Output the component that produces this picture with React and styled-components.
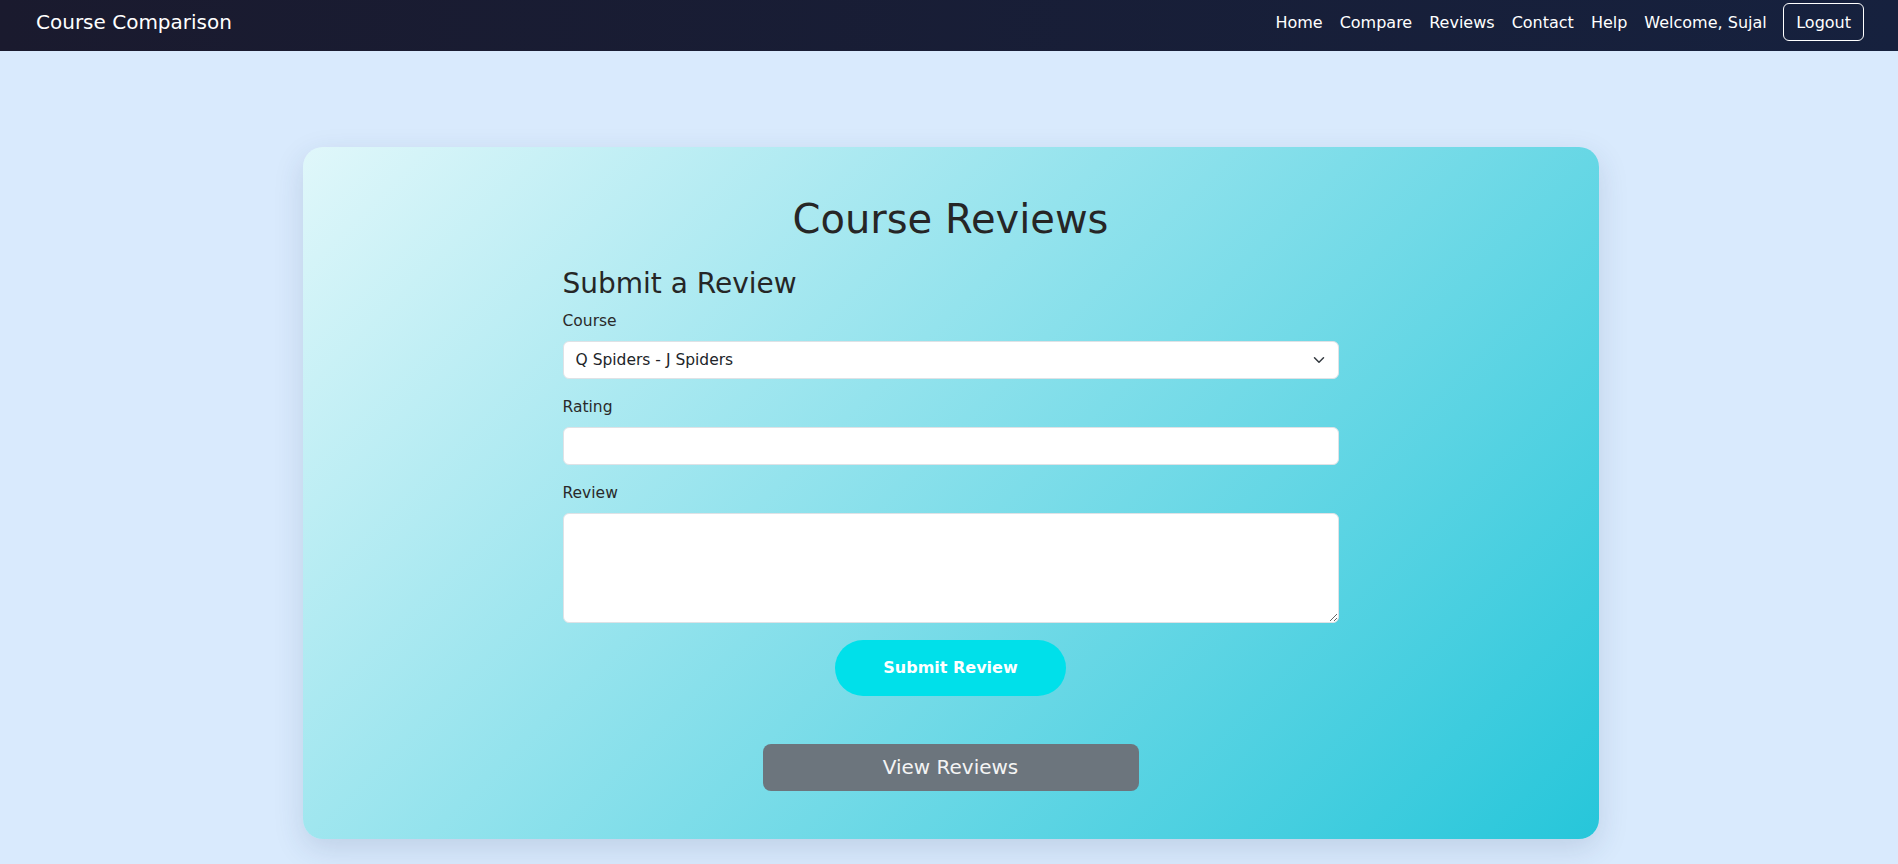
import styled, { createGlobalStyle } from "styled-components";
import { useState } from "react";

const GlobalStyle = createGlobalStyle`
    * { box-sizing: border-box; }
    body {
        margin: 0;
        background: #d9eafd;
        font-family: "DejaVu Sans", "Noto Sans", sans-serif;
        color: #212529;
    }
`

function App() {
    const [course, setCourse] = useState("qj");
    const [rating, setRating] = useState("");
    const [review, setReview] = useState("");

    return (
        <>
            <GlobalStyle />
            <Navbar>
                <Brand href="#">Course Comparison</Brand>
                <NavLinks>
                    <NavLink href="#">Home</NavLink>
                    <NavLink href="#">Compare</NavLink>
                    <NavLink href="#">Reviews</NavLink>
                    <NavLink href="#">Contact</NavLink>
                    <NavLink href="#">Help</NavLink>
                    <Welcome>Welcome, Sujal</Welcome>
                    <LogoutButton>Logout</LogoutButton>
                </NavLinks>
            </Navbar>

            <Page>
                <Card>
                    <Title>Course Reviews</Title>
                    <Form onSubmit={e => e.preventDefault()}>
                        <Heading>Submit a Review</Heading>
                        <Field>
                            <Label htmlFor="course">Course</Label>
                            <SelectWrap>
                                <Select id="course" value={course} onChange={e => setCourse(e.target.value)}>
                                    <option value="qj">Q Spiders - J Spiders</option>
                                </Select>
                                <Chevron viewBox="0 0 16 16">
                                    <path d="M2 5l6 6 6-6" fill="none" stroke="#343a40" strokeWidth="2" strokeLinecap="round" strokeLinejoin="round" />
                                </Chevron>
                            </SelectWrap>
                        </Field>
                        <Field>
                            <Label htmlFor="rating">Rating</Label>
                            <Input id="rating" type="number" value={rating} onChange={e => setRating(e.target.value)} />
                        </Field>
                        <Field>
                            <Label htmlFor="review">Review</Label>
                            <TextArea id="review" rows={4} value={review} onChange={e => setReview(e.target.value)} />
                        </Field>
                        <SubmitButton type="submit">Submit Review</SubmitButton>
                    </Form>
                    <ViewButton>View Reviews</ViewButton>
                </Card>
            </Page>
        </>
    );
}

const Navbar = styled.nav`
    height: 51px;
    padding: 3px 34px 10px 36px;
    display: flex;
    align-items: center;
    justify-content: space-between;
    background: linear-gradient(90deg, #1a1a2e, #16213e);
`

const Brand = styled.a`
    color: #fff;
    font-size: 20px;
    text-decoration: none;
`

const NavLinks = styled.div`
    display: flex;
    align-items: center;
`

const NavLink = styled.a`
    color: #fff;
    font-size: 16px;
    padding: 0 8.5px;
    text-decoration: none;
`

const Welcome = styled.span`
    color: #fff;
    font-size: 16px;
    padding: 0 8.5px;
    margin-right: 8px;
`

const LogoutButton = styled.button`
    font-family: inherit;
    font-size: 16px;
    color: #fff;
    background: transparent;
    border: 1px solid #fff;
    border-radius: 6px;
    height: 38px;
    padding: 0 12px;
`

const Page = styled.main`
    padding: 96px 0 40px 3px;
    display: flex;
    justify-content: center;
`

const Card = styled.section`
    width: 1296px;
    padding: 48px;
    border-radius: 20px;
    background: linear-gradient(135deg, #e0f7fa, #26c6da);
    box-shadow: 0 10px 30px rgba(40, 60, 100, 0.15);
    display: flex;
    flex-direction: column;
    align-items: center;
`

const Title = styled.h1`
    margin: 0 0 24px;
    font-size: 40px;
    font-weight: 400;
    line-height: 1.2;
    color: #262626;
`

const Form = styled.form`
    width: 776px;
    display: flex;
    flex-direction: column;
`

const Heading = styled.h3`
    margin: 0 0 8px;
    font-size: 28px;
    font-weight: 400;
    line-height: 1.2;
    color: #262626;
`

const Field = styled.div`
    display: flex;
    flex-direction: column;
    margin-bottom: 16px;
`

const Label = styled.label`
    font-size: 15.5px;
    line-height: 24px;
    margin-bottom: 8px;
    color: #2a2a2a;
`

const controlStyles = `
    width: 100%;
    font-family: inherit;
    font-size: 15.5px;
    line-height: 24px;
    color: #212529;
    background: #fff;
    border: 1px solid #dee2e6;
    border-radius: 6px;
    padding: 6px 12px;
    outline: none;
`

const SelectWrap = styled.div`
    position: relative;
`

const Select = styled.select`
    ${controlStyles}
    height: 38px;
    appearance: none;
`

const Chevron = styled.svg`
    position: absolute;
    right: 14px;
    top: 13px;
    width: 12px;
    height: 12px;
    pointer-events: none;
`

const Input = styled.input`
    ${controlStyles}
    height: 38px;
    appearance: textfield;
    &::-webkit-inner-spin-button { appearance: none; }
`

const TextArea = styled.textarea`
    ${controlStyles}
    display: block;
    resize: vertical;
`

const SubmitButton = styled.button`
    align-self: center;
    margin-top: 1px;
    height: 56px;
    padding: 0 48px;
    border: none;
    border-radius: 28px;
    background: #00e0ea;
    color: #fff;
    font-family: inherit;
    font-size: 16px;
    font-weight: 700;
`

const ViewButton = styled.button`
    margin-top: 48px;
    width: 376px;
    height: 47px;
    border: none;
    border-radius: 8px;
    background: #6c757d;
    color: #f4f4f4;
    font-family: inherit;
    font-size: 20px;
`

export default App;
